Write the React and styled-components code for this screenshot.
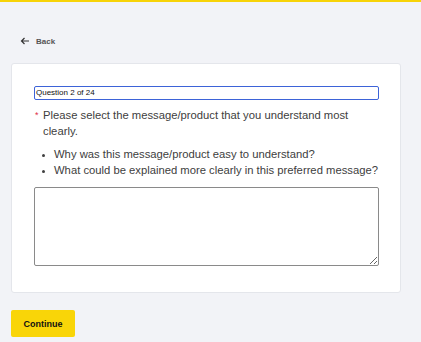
import React from 'react';
import styled, { createGlobalStyle } from 'styled-components';

const GlobalStyle = createGlobalStyle`
    body {
        margin: 0;
        background: #f2f3f7;
        font-family: 'Liberation Sans', Arial, sans-serif;
        color: #404040;
    }
`;

const App = () => {
    return (
        <>
            <GlobalStyle />
            <TopBar />
            <Page>
                <BackLink href="#">
                    <svg width="10" height="10" viewBox="0 0 10 10" fill="none" stroke="#333" strokeWidth="1.2">
                        <path d="M9 5H1.5M4.5 2L1.5 5l3 3" />
                    </svg>
                    Back
                </BackLink>
                <Card>
                    <QuestionLabel>Question 2 of 24</QuestionLabel>
                    <Prompt>
                        <Required>*</Required>
                        <span>Please select the message/product that you understand most clearly.</span>
                    </Prompt>
                    <Bullets>
                        <li>Why was this message/product easy to understand?</li>
                        <li>What could be explained more clearly in this preferred message?</li>
                    </Bullets>
                    <Answer />
                </Card>
                <ContinueButton>Continue</ContinueButton>
            </Page>
        </>
    );
};

const TopBar = styled.div`
    height: 2px;
    background: #f7d308;
`;

const Page = styled.main`
    padding: 0 20px 0 11px;
`;

const BackLink = styled.a`
    display: flex;
    align-items: center;
    gap: 6px;
    margin: 32px 0 0 9px;
    height: 14px;
    font-size: 8px;
    font-weight: bold;
    color: #555;
    text-decoration: none;
`;

const Card = styled.section`
    margin-top: 15px;
    background: #fff;
    border: 1px solid #e4e6eb;
    border-radius: 3px;
    padding: 22px 21px 26px 22px;
`;

const QuestionLabel = styled.div`
    height: 12px;
    border: 1px solid #3d63d8;
    border-radius: 2px;
    font-size: 8px;
    line-height: 12px;
    color: #111;
    padding-left: 1px;
`;

const Prompt = styled.p`
    display: flex;
    margin: 7px 0 0;
    font-size: 11.25px;
    line-height: 16px;
`;

const Required = styled.span`
    color: #e0314b;
    font-size: 9px;
    width: 8px;
    flex-shrink: 0;
    padding-left: 1px;
`;

const Bullets = styled.ul`
    margin: 7px 0 0;
    padding: 0 0 0 20px;
    font-size: 11.25px;
    line-height: 16px;
    white-space: nowrap;

    li::marker {
        font-size: 9px;
    }
`;

const Answer = styled.textarea`
    display: block;
    box-sizing: border-box;
    width: 100%;
    height: 79px;
    margin-top: 9px;
    border: 1px solid #8a8a8a;
    border-radius: 2px;
    resize: vertical;
`;

const ContinueButton = styled.button`
    display: block;
    margin-top: 17px;
    width: 64px;
    height: 27px;
    border: none;
    border-radius: 2px;
    background: #f9d508;
    font-family: 'Liberation Sans', Arial, sans-serif;
    font-size: 9px;
    font-weight: bold;
    color: #111;
`;

export default App;
